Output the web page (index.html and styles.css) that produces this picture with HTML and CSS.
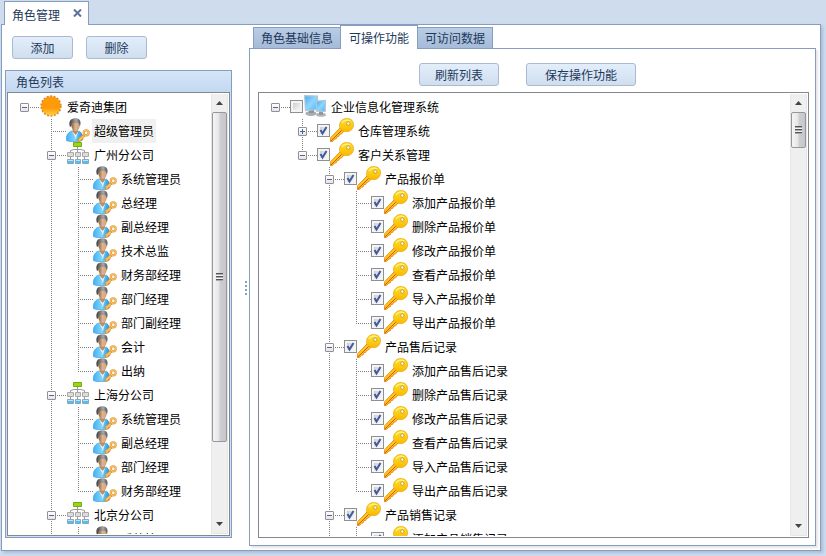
FILE: index.html
```
<!DOCTYPE html>
<html lang="zh-CN">
<head>
    <meta charset="UTF-8">
    <meta name="viewport" content="width=device-width, initial-scale=1.0">
    <title>角色管理</title>
    <link rel="stylesheet" href="styles.css">
</head>
<body>

    <svg class="sprite" aria-hidden="true">
        <defs>
            <linearGradient id="g-sun" x1="0" y1="0" x2="0" y2="1">
                <stop offset="0.6" stop-color="#ff9b08"/>
                <stop offset="1" stop-color="#ffd24a"/>
            </linearGradient>
            <linearGradient id="g-hair" x1="0" y1="0" x2="1" y2="0">
                <stop offset="0" stop-color="#3c3c3c"/>
                <stop offset="0.6" stop-color="#a8a8a8"/>
                <stop offset="1" stop-color="#555"/>
            </linearGradient>
            <linearGradient id="g-face" x1="0" y1="0" x2="1" y2="0">
                <stop offset="0" stop-color="#7d5a3c"/>
                <stop offset="0.5" stop-color="#dfb48c"/>
                <stop offset="1" stop-color="#c9a27c"/>
            </linearGradient>
            <linearGradient id="g-shirt" x1="0" y1="0" x2="1" y2="0">
                <stop offset="0" stop-color="#3fb2f4"/>
                <stop offset="0.5" stop-color="#7fd2fc"/>
                <stop offset="1" stop-color="#1f93e0"/>
            </linearGradient>
            <linearGradient id="g-key" x1="0" y1="0" x2="0" y2="1">
                <stop offset="0" stop-color="#ffe12e"/>
                <stop offset="1" stop-color="#fbb800"/>
            </linearGradient>
            <linearGradient id="g-screen" x1="0" y1="0" x2="1" y2="1">
                <stop offset="0" stop-color="#3fa9f0"/>
                <stop offset="0.5" stop-color="#8fd6ff"/>
                <stop offset="1" stop-color="#4fb5f2"/>
            </linearGradient>
        </defs>

        <symbol id="i-sun" viewBox="0 0 24 24">
            <circle cx="12" cy="12" r="9.800" fill="url(#g-sun)"/>
            <circle cx="12" cy="12" r="9.900" fill="none" stroke="#d98a20" stroke-width="1.500" stroke-dasharray="2 1.500"/>
        </symbol>

        <symbol id="i-user" viewBox="0 0 24 24">
            <path d="M.3 22.500C0 18 1.500 14.500 5.500 13l3.500 2 4-2c3 1.500 4.200 5 3.500 9-1.500 1.200-4.500 1.700-8 1.700S2 23.500.3 22.500z" fill="url(#g-shirt)" stroke="#2a8fd0" stroke-width=".5"/>
            <path d="M6.500 10.500h5.500v3l-2.300 4.500-3.200-4.500z" fill="#b98c66"/>
            <path d="M5.800 13l3.200 5.500L9.800 22l.8-4L12.600 13l-2.800 4z" fill="#e8f5fd"/>
            <path d="M5 5c0-2 2-3.500 4.700-3.500S14 3 14 5.500c0 4-1.500 7.500-4.200 7.500S5 9.500 5 5z" fill="url(#g-face)"/>
            <path d="M3.800 8.500C2.500 3.500 4.500.5 9 .3c4-.2 6.500 2 5.200 7.200l-.7.500c0-1.500-.5-2.500-1.500-3.300-2 .5-4 .2-5.500 0-1 .8-1.500 1.800-1.500 4z" fill="url(#g-hair)"/>
            <path d="M17.800 16.200L12.300 21l.2 2.300 2.200-.3.700-1.500 1.500-.4.300-1.500 2.300-1.800" fill="#ffc45a" stroke="#e08f28" stroke-width=".9"/>
            <circle cx="20.200" cy="14.800" r="2.500" fill="#fff" stroke="#e3942c" stroke-width="2.200"/>
            <circle cx="20.200" cy="14.800" r="2.600" fill="none" stroke="#ffcf75" stroke-width="1"/>
        </symbol>

        <symbol id="i-org" viewBox="0 0 24 24">
            <path d="M11.500 5v5M4.500 10V8.500L8 7.500h7l3.500 1V10M4.500 15v3M11.500 15v3M18.500 15v3" fill="none" stroke="#9a9a9a"/>
            <path d="M7.500.5h8v4h-8z" fill="#9bd610" stroke="#6fae12"/>
            <path d="M1.500 10.500h6v4h-6zM9.500 10.500h5v4h-5zM16.500 10.500h6v4h-6z" fill="#dcdcdc" stroke="#a9a9a9"/>
            <path d="M1.500 17.500h6v4h-6zM9.500 17.500h5v4h-5zM16.500 17.500h6v4h-6z" fill="#4cc0f4" stroke="#8fa6b8"/>
            <path d="M2 18.500h5M10 18.500h4M17 18.500h5" stroke="#b4e6ff"/>
        </symbol>

        <symbol id="i-pc" viewBox="-1 -1 24 24">
            <ellipse cx="7" cy="18.500" rx="5.500" ry="2.500" fill="#a9adb0"/>
            <path d="M5 14h5v4H5z" fill="#8f9498"/>
            <path d="M.6.600L13.500 1v13.500L1.500 15.500z" fill="url(#g-screen)" stroke="#b4c6d4" stroke-width="1.200"/>
            <ellipse cx="17" cy="19.800" rx="5" ry="2" fill="#b5b8ba"/>
            <path d="M15 16h4v4h-4z" fill="#92979b"/>
            <path d="M12.500 6.200l9-.7-.3 11-8.700-.3z" fill="url(#g-screen)" stroke="#b4c6d4" stroke-width="1.200"/>
        </symbol>

        <symbol id="i-key" viewBox="0 0 24 24">
            <path d="M10.500 9.500L.8 19.500l-.5 4 2.400-.2 1.600-2 2-.6.600-2 2-.5.600-1.800 2-.5 2.500-3z" fill="#ffca1c" stroke="#e0860f" stroke-width=".9"/>
            <path d="M.8 23L12 12" stroke="#d94a14" stroke-width="1"/>
            <path d="M11.200 3C12.800 1 15 .5 17.500.6c3.700.2 6 2.600 6 6 0 4-2.700 7-6.700 7-2 0-4.300-.3-5.800-1.900-2.100-2.400-1.900-6.200.2-8.700z" fill="url(#g-key)" stroke="#e6a80e" stroke-width=".8"/>
            <path d="M12 4.800C13.500 2.500 16.500 1.600 20 2.600" fill="none" stroke="#fff08a" stroke-width="1.200"/>
            <circle cx="18.300" cy="5.600" r="1.700" fill="#fff" stroke="#c2951c" stroke-width=".9"/>
        </symbol>
    </svg>

    <nav class="page-tabs">
        <div class="page-tab">
            <span>角色管理</span>
            <button class="close" type="button" aria-label="关闭">
                <svg viewBox="0 0 9 8"><path d="M1 .5l7 7M8 .5l-7 7" stroke="#5f7196" stroke-width="2"/></svg>
            </button>
        </div>
    </nav>

    <main class="page">
        <section class="side">
            <div class="side-buttons">
                <button class="btn" type="button">添加</button>
                <button class="btn" type="button">删除</button>
            </div>
            <div class="panel">
                <h2 class="panel-title">角色列表</h2>
                <div class="tree-box">
                    <ul class="tree">
                        <li>
                            <div class="row"><button class="toggle" type="button" aria-label="折叠"></button><svg class="icon"><use href="#i-sun"/></svg><span class="name">爱奇迪集团</span></div>
                            <ul>
                                <li><div class="row"><svg class="icon"><use href="#i-user"/></svg><span class="name selected">超级管理员</span></div></li>
                                <li>
                                    <div class="row"><button class="toggle" type="button" aria-label="折叠"></button><svg class="icon"><use href="#i-org"/></svg><span class="name">广州分公司</span></div>
                                    <ul>
                                        <li><div class="row"><svg class="icon"><use href="#i-user"/></svg><span class="name">系统管理员</span></div></li>
                                        <li><div class="row"><svg class="icon"><use href="#i-user"/></svg><span class="name">总经理</span></div></li>
                                        <li><div class="row"><svg class="icon"><use href="#i-user"/></svg><span class="name">副总经理</span></div></li>
                                        <li><div class="row"><svg class="icon"><use href="#i-user"/></svg><span class="name">技术总监</span></div></li>
                                        <li><div class="row"><svg class="icon"><use href="#i-user"/></svg><span class="name">财务部经理</span></div></li>
                                        <li><div class="row"><svg class="icon"><use href="#i-user"/></svg><span class="name">部门经理</span></div></li>
                                        <li><div class="row"><svg class="icon"><use href="#i-user"/></svg><span class="name">部门副经理</span></div></li>
                                        <li><div class="row"><svg class="icon"><use href="#i-user"/></svg><span class="name">会计</span></div></li>
                                        <li><div class="row"><svg class="icon"><use href="#i-user"/></svg><span class="name">出纳</span></div></li>
                                    </ul>
                                </li>
                                <li>
                                    <div class="row"><button class="toggle" type="button" aria-label="折叠"></button><svg class="icon"><use href="#i-org"/></svg><span class="name">上海分公司</span></div>
                                    <ul>
                                        <li><div class="row"><svg class="icon"><use href="#i-user"/></svg><span class="name">系统管理员</span></div></li>
                                        <li><div class="row"><svg class="icon"><use href="#i-user"/></svg><span class="name">副总经理</span></div></li>
                                        <li><div class="row"><svg class="icon"><use href="#i-user"/></svg><span class="name">部门经理</span></div></li>
                                        <li><div class="row"><svg class="icon"><use href="#i-user"/></svg><span class="name">财务部经理</span></div></li>
                                    </ul>
                                </li>
                                <li class="more">
                                    <div class="row"><button class="toggle" type="button" aria-label="折叠"></button><svg class="icon"><use href="#i-org"/></svg><span class="name">北京分公司</span></div>
                                    <ul>
                                        <li class="more"><div class="row"><svg class="icon"><use href="#i-user"/></svg><span class="name">系统管理员</span></div></li>
                                    </ul>
                                </li>
                            </ul>
                        </li>
                    </ul>
                    <div class="scrollbar">
                        <button class="arrow" type="button" aria-label="向上滚动"><svg viewBox="0 0 7 4"><path d="M0 4l3.500-4L7 4z"/></svg></button>
                        <div class="track"><div class="thumb thumb-roles"><i></i></div></div>
                        <button class="arrow" type="button" aria-label="向下滚动"><svg viewBox="0 0 7 4"><path d="M0 0l3.500 4L7 0z"/></svg></button>
                    </div>
                </div>
            </div>
        </section>

        <div class="splitter"><i></i><i></i><i></i><i></i></div>

        <section class="detail">
            <nav class="tabs">
                <button class="tab" type="button">角色基础信息</button>
                <button class="tab active" type="button">可操作功能</button>
                <button class="tab" type="button">可访问数据</button>
            </nav>
            <div class="pane">
                <div class="pane-buttons">
                    <button class="btn" type="button">刷新列表</button>
                    <button class="btn btn-wide" type="button">保存操作功能</button>
                </div>
                <div class="tree-box">
                    <ul class="tree">
                        <li>
                            <div class="row"><button class="toggle" type="button" aria-label="折叠"></button><label><input type="checkbox"><svg class="icon"><use href="#i-pc"/></svg><span class="name">企业信息化管理系统</span></label></div>
                            <ul>
                                <li><div class="row"><button class="toggle plus" type="button" aria-label="展开"></button><label><input type="checkbox" checked><svg class="icon"><use href="#i-key"/></svg><span class="name">仓库管理系统</span></label></div></li>
                                <li>
                                    <div class="row"><button class="toggle" type="button" aria-label="折叠"></button><label><input type="checkbox" checked><svg class="icon"><use href="#i-key"/></svg><span class="name">客户关系管理</span></label></div>
                                    <ul>
                                        <li>
                                            <div class="row"><button class="toggle" type="button" aria-label="折叠"></button><label><input type="checkbox" checked><svg class="icon"><use href="#i-key"/></svg><span class="name">产品报价单</span></label></div>
                                            <ul>
                                                <li><div class="row"><label><input type="checkbox" checked><svg class="icon"><use href="#i-key"/></svg><span class="name">添加产品报价单</span></label></div></li>
                                                <li><div class="row"><label><input type="checkbox" checked><svg class="icon"><use href="#i-key"/></svg><span class="name">删除产品报价单</span></label></div></li>
                                                <li><div class="row"><label><input type="checkbox" checked><svg class="icon"><use href="#i-key"/></svg><span class="name">修改产品报价单</span></label></div></li>
                                                <li><div class="row"><label><input type="checkbox" checked><svg class="icon"><use href="#i-key"/></svg><span class="name">查看产品报价单</span></label></div></li>
                                                <li><div class="row"><label><input type="checkbox" checked><svg class="icon"><use href="#i-key"/></svg><span class="name">导入产品报价单</span></label></div></li>
                                                <li><div class="row"><label><input type="checkbox" checked><svg class="icon"><use href="#i-key"/></svg><span class="name">导出产品报价单</span></label></div></li>
                                            </ul>
                                        </li>
                                        <li>
                                            <div class="row"><button class="toggle" type="button" aria-label="折叠"></button><label><input type="checkbox" checked><svg class="icon"><use href="#i-key"/></svg><span class="name">产品售后记录</span></label></div>
                                            <ul>
                                                <li><div class="row"><label><input type="checkbox" checked><svg class="icon"><use href="#i-key"/></svg><span class="name">添加产品售后记录</span></label></div></li>
                                                <li><div class="row"><label><input type="checkbox" checked><svg class="icon"><use href="#i-key"/></svg><span class="name">删除产品售后记录</span></label></div></li>
                                                <li><div class="row"><label><input type="checkbox" checked><svg class="icon"><use href="#i-key"/></svg><span class="name">修改产品售后记录</span></label></div></li>
                                                <li><div class="row"><label><input type="checkbox" checked><svg class="icon"><use href="#i-key"/></svg><span class="name">查看产品售后记录</span></label></div></li>
                                                <li><div class="row"><label><input type="checkbox" checked><svg class="icon"><use href="#i-key"/></svg><span class="name">导入产品售后记录</span></label></div></li>
                                                <li><div class="row"><label><input type="checkbox" checked><svg class="icon"><use href="#i-key"/></svg><span class="name">导出产品售后记录</span></label></div></li>
                                            </ul>
                                        </li>
                                        <li class="more">
                                            <div class="row"><button class="toggle" type="button" aria-label="折叠"></button><label><input type="checkbox" checked><svg class="icon"><use href="#i-key"/></svg><span class="name">产品销售记录</span></label></div>
                                            <ul>
                                                <li class="more"><div class="row"><label><input type="checkbox" checked><svg class="icon"><use href="#i-key"/></svg><span class="name">添加产品销售记录</span></label></div></li>
                                            </ul>
                                        </li>
                                    </ul>
                                </li>
                            </ul>
                        </li>
                    </ul>
                    <div class="scrollbar">
                        <button class="arrow" type="button" aria-label="向上滚动"><svg viewBox="0 0 7 4"><path d="M0 4l3.500-4L7 4z"/></svg></button>
                        <div class="track"><div class="thumb thumb-functions"><i></i></div></div>
                        <button class="arrow" type="button" aria-label="向下滚动"><svg viewBox="0 0 7 4"><path d="M0 0l3.500 4L7 0z"/></svg></button>
                    </div>
                </div>
            </div>
        </section>
    </main>

</body>
</html>
```
FILE: styles.css
```
* {
    box-sizing: border-box;
}

body {
    margin: 0;
    padding: 1px 5px 5px 1px;
    height: 100vh;
    display: flex;
    flex-direction: column;
    overflow: hidden;
    background: #cfdcee;
    color: #1e395b;
    font-family: "Noto Sans CJK SC", sans-serif;
    font-size: 12px;
    line-height: 16px;
}

button {
    font: inherit;
    color: inherit;
    padding: 0;
    margin: 0;
    border: none;
    background: none;
}

ul {
    list-style: none;
    margin: 0;
    padding: 0;
}

.sprite {
    position: absolute;
    width: 0;
    height: 0;
}

/* Page tab */
.page-tabs {
    display: flex;
    padding-left: 3px;
    margin-bottom: -1px;
    z-index: 1;
}

.page-tab {
    display: flex;
    align-items: center;
    gap: 13px;
    height: 24px;
    padding: 2px 6px 0 7px;
    background: #fff;
    border: 1px solid #859ebf;
    border-bottom: none;
}

.close {
    display: flex;
    padding-bottom: 4px;
}

.close svg {
    width: 9px;
    height: 8px;
}

.page {
    flex: 1;
    min-height: 0;
    display: flex;
    background: #fff;
    border: 1px solid #859ebf;
    box-shadow: 2px 2px 3px #a9bdd8;
}

/* Buttons */
.btn {
    height: 23px;
    min-width: 61px;
    padding: 0 15px;
    border: 1px solid #abbad0;
    border-radius: 3px;
    background: linear-gradient(#e3eefb, #cfdeee);
}

.btn-wide {
    padding: 0 18px;
}

/* Left side */
.side {
    width: 230px;
    padding: 11px 0 12px 3px;
    display: flex;
    flex-direction: column;
    gap: 11px;
}

.side-buttons {
    display: flex;
    gap: 13px;
    padding-left: 7px;
}

.panel {
    flex: 1;
    min-height: 0;
    display: flex;
    flex-direction: column;
    padding: 0 1px 1px;
    border: 1px solid #859ebf;
    background: #cfe0f5;
}

.panel-title {
    margin: 0 -1px;
    height: 21px;
    padding: 3px 10px 0;
    font-size: 12px;
    font-weight: normal;
    line-height: 16px;
    background: linear-gradient(#d6e5f7, #c3d8f1);
}

/* Trees */
.tree-box {
    flex: 1;
    min-height: 0;
    display: flex;
    padding: 1px;
    background: #fff;
    border: 1px solid #828790;
}

.tree {
    flex: 1;
    min-width: 0;
    overflow: hidden;
    padding: 1px 0 0 3px;
    color: #000;
}

.tree ul {
    padding-left: 27px;
}

.tree li li {
    background: repeating-linear-gradient(#808080 0 1px, transparent 1px 2px) 12px 0 / 1px 100% no-repeat;
}

.tree li li:last-child:not(.more) {
    background-size: 1px 12px;
}

.row {
    display: flex;
    align-items: center;
    height: 24px;
    padding-left: 28px;
    background: repeating-linear-gradient(90deg, #808080 0 1px, transparent 1px 2px) 12px 12px / 15px 1px no-repeat;
}

.row label {
    display: flex;
    align-items: center;
    margin-left: -1px;
}

.toggle {
    flex: none;
    width: 9px;
    height: 9px;
    margin: 0 11px 0 -20px;
    border: 1px solid #919191;
    border-radius: 1px;
    background: linear-gradient(#4b63a7, #4b63a7) 1px 3px / 5px 1px no-repeat,
                linear-gradient(#fff, #e4e4e4);
}

.toggle.plus {
    background: linear-gradient(#4b63a7, #4b63a7) 1px 3px / 5px 1px no-repeat,
                linear-gradient(#4b63a7, #4b63a7) 3px 1px / 1px 5px no-repeat,
                linear-gradient(#fff, #e4e4e4);
}

.icon {
    flex: none;
    width: 24px;
    height: 24px;
    margin: 0 0 2px -1px;
}

.name {
    margin-left: 2px;
    padding: 3px 2px;
    line-height: 18px;
    white-space: nowrap;
}

.name.selected {
    background: #f0f0f0;
}

input[type="checkbox"] {
    appearance: none;
    flex: none;
    width: 13px;
    height: 13px;
    margin: 0 1px 2px 0;
    border: 1px solid #8e8f8f;
    background: linear-gradient(135deg, #cbcfd5, #f6f6f6) 2px 2px / 7px 7px no-repeat, #f4f4f4;
}

input[type="checkbox"]:checked {
    background: url("data:image/svg+xml,%3Csvg xmlns='http://www.w3.org/2000/svg' viewBox='0 0 11 11'%3E%3Cpath d='M2.500 5l2 3.500L8.500 2' fill='none' stroke='%23415a9e' stroke-width='2'/%3E%3C/svg%3E"),
                linear-gradient(135deg, #cbcfd5, #f6f6f6) 2px 2px / 7px 7px no-repeat, #f4f4f4;
}

/* Scrollbars */
.scrollbar {
    flex: none;
    width: 17px;
    display: flex;
    flex-direction: column;
    background: #efefef;
    border: 1px solid #e6e6e6;
    border-top: none;
}

.arrow {
    height: 18px;
    display: flex;
    align-items: center;
    justify-content: center;
}

.arrow svg {
    width: 7px;
    height: 4px;
    fill: #444;
}

.track {
    flex: 1;
    min-height: 0;
}

.thumb {
    display: flex;
    align-items: center;
    justify-content: center;
    border: 1px solid #979797;
    border-radius: 2px;
    background: linear-gradient(90deg, #f5f5f5 0, #e6e6e8 45%, #cdcdd2 55%, #c6c6cc);
}

.thumb i {
    width: 7px;
    height: 8px;
    background: repeating-linear-gradient(#555 0 1px, #aaa 1px 2px, #f5f5f5 2px 3px);
}

.thumb-roles {
    height: 82%;
}

.thumb-functions {
    height: 36px;
}

/* Splitter */
.splitter {
    flex: none;
    width: 17px;
    padding-right: 2px;
    display: flex;
    flex-direction: column;
    align-items: flex-end;
    justify-content: center;
    gap: 2px;
}

.splitter i {
    width: 2px;
    height: 2px;
    background: #859ebf;
}

/* Right side */
.detail {
    flex: 1;
    min-width: 0;
    display: flex;
    flex-direction: column;
    padding: 0 4px 4px 0;
}

.tabs {
    display: flex;
    align-items: flex-end;
    height: 24px;
    margin-bottom: -1px;
    padding-left: 4px;
    z-index: 1;
}

.tab {
    height: 22px;
    padding: 0 7px;
    border: 1px solid #859ebf;
    background: linear-gradient(#b9cce4, #a5bbd8);
}

.tab.active {
    height: 24px;
    margin: 0 -1px;
    padding: 0 8px;
    border-bottom: none;
    background: #fff;
}

.pane {
    flex: 1;
    min-height: 0;
    display: flex;
    flex-direction: column;
    gap: 6px;
    padding: 14px 6px 7px 8px;
    background: #fff;
    border: 1px solid #859ebf;
    box-shadow: 2px 2px 2px #e6e6e6;
}

.pane-buttons {
    display: flex;
    gap: 27px;
    padding-left: 161px;
}
```
